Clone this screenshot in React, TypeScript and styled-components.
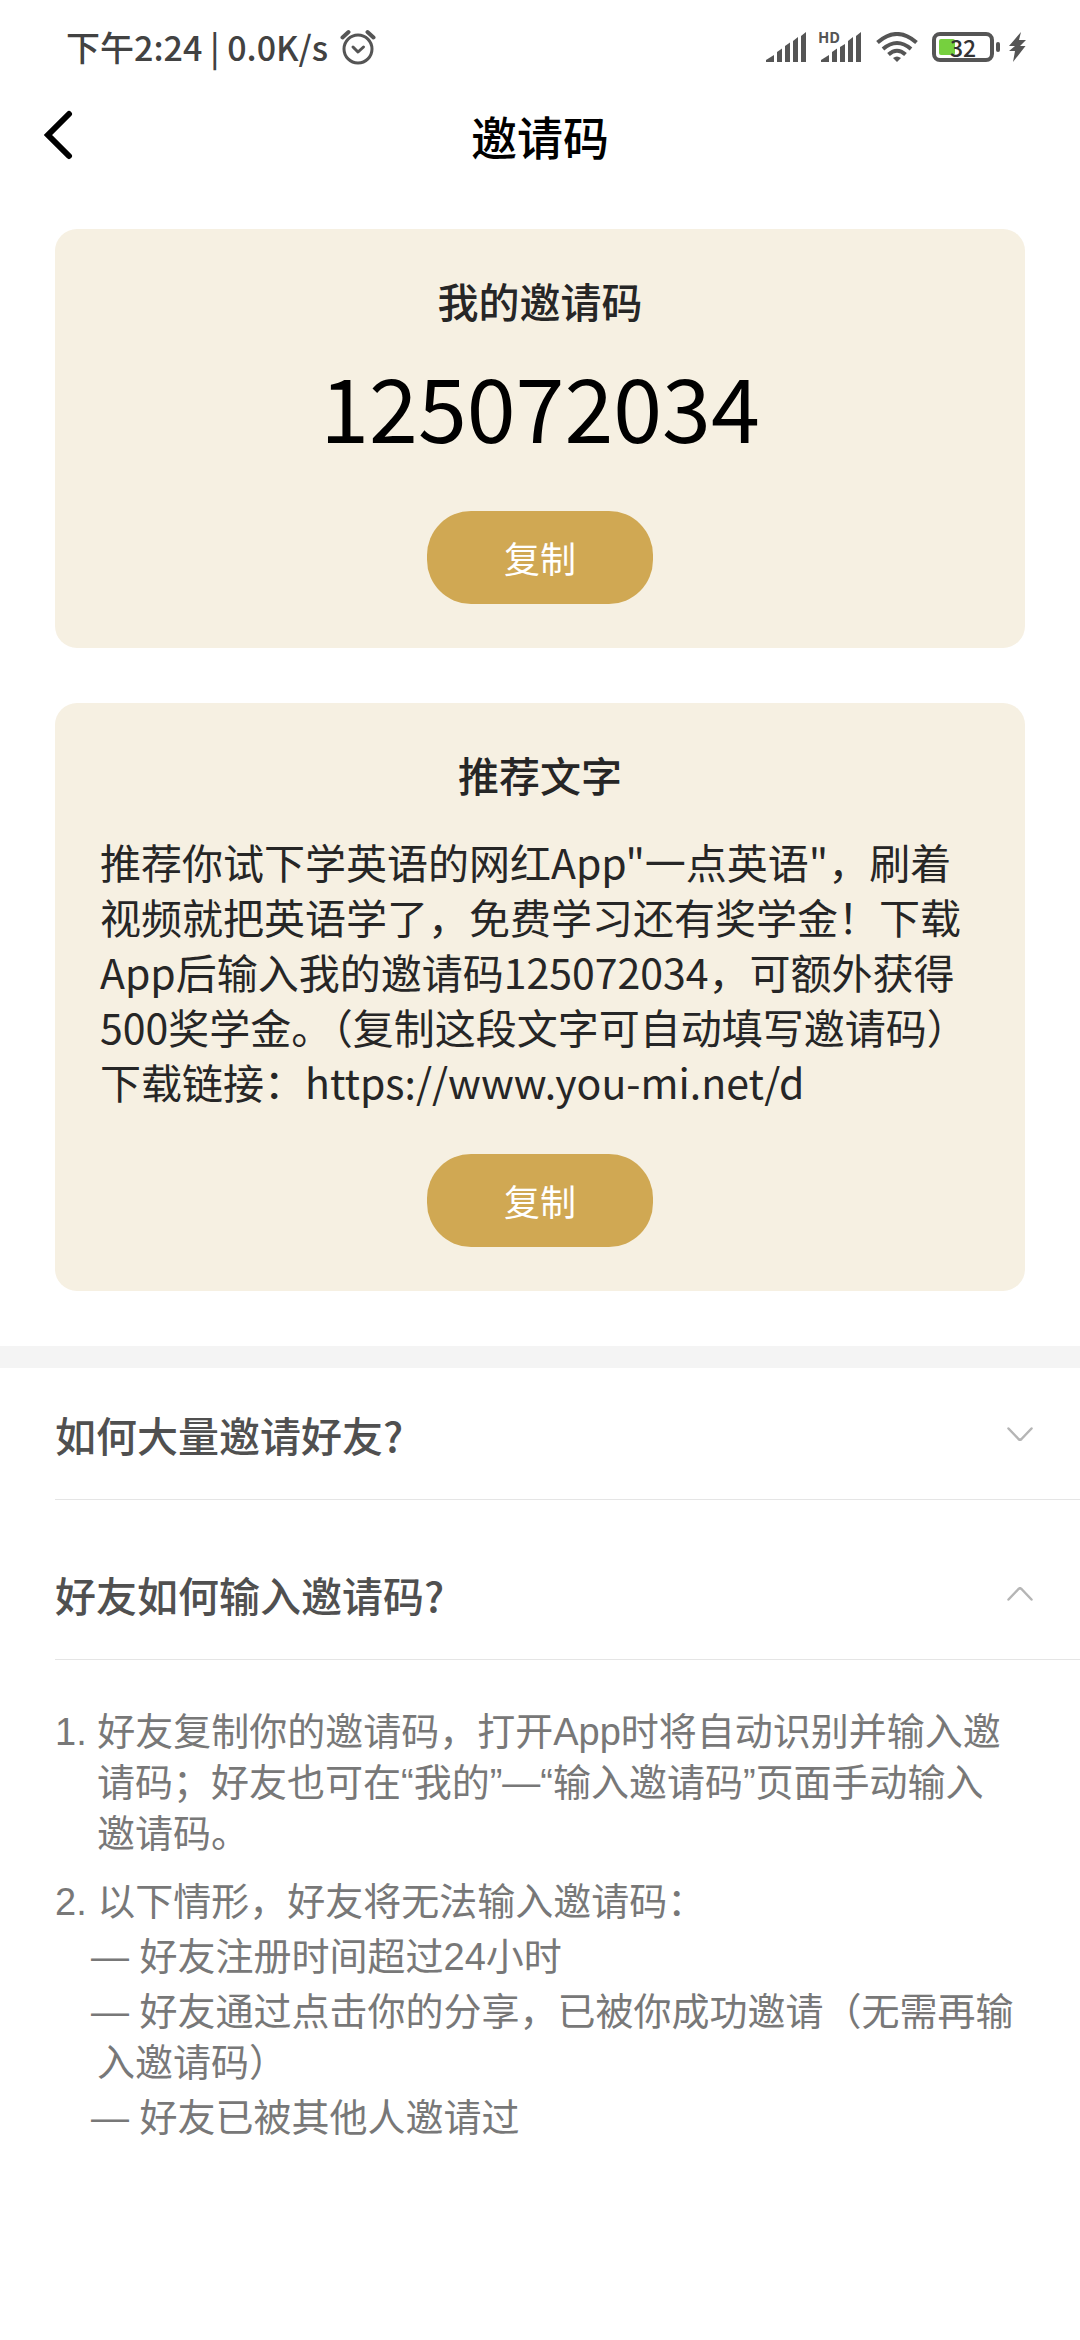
import React, { useState } from "react";
import styled, { createGlobalStyle } from "styled-components";

const GlobalStyle = createGlobalStyle`
  *, *::before, *::after { box-sizing: border-box; }
  body {
    margin: 0;
    background: #ffffff;
    font-family: "Noto Sans CJK SC", "Noto Sans", sans-serif;
    color: #262626;
  }
  h1, h2, h3, p, ol, ul { margin: 0; padding: 0; }
  button { font-family: inherit; border: 0; padding: 0; background: none; cursor: pointer; }
`;

const StatusBar = styled.div`
  display: flex;
  align-items: center;
  justify-content: space-between;
  height: 94px;
  padding: 0 54px 0 66px;
  color: #424242;
`;

const StatusGroup = styled.div<{ $gap: number }>`
  display: flex;
  align-items: center;
  gap: ${(p) => p.$gap}px;
`;

const StatusText = styled.span`
  font-size: 34px;
  line-height: 40px;
  font-weight: 500;
  white-space: pre;
`;

const Signal = styled.div`
  position: relative;
  display: flex;
`;

const NetworkTag = styled.span`
  position: absolute;
  left: -3px;
  top: -3px;
  font-size: 15px;
  line-height: 16px;
  font-weight: 700;
  color: #555555;
`;

const Battery = styled.div`
  position: relative;
  display: flex;
`;

const BatteryLevel = styled.span`
  position: absolute;
  inset: 0 6px 0 0;
  display: flex;
  align-items: center;
  justify-content: center;
  font-size: 23px;
  line-height: 30px;
  font-weight: 500;
  color: #333333;
`;

const Header = styled.header`
  display: grid;
  grid-template-columns: 116px 1fr 116px;
  align-items: center;
  height: 82px;
`;

const BackButton = styled.button`
  display: flex;
  align-items: center;
  height: 82px;
  padding-left: 43px;
`;

const Title = styled.h1`
  font-size: 46px;
  line-height: 82px;
  font-weight: 500;
  text-align: center;
  color: #000000;
`;

const Cards = styled.main`
  display: flex;
  flex-direction: column;
  gap: 55px;
  padding: 53px 55px 55px;
`;

const Card = styled.section`
  display: flex;
  flex-direction: column;
  align-items: center;
  padding: 42px 45px 44px;
  border-radius: 22px;
  background: #f6f0e2;
`;

const CardTitle = styled.h2`
  font-size: 41px;
  line-height: 58px;
  font-weight: 500;
`;

const Code = styled.p`
  margin: 21px 0 51px;
  font-size: 88px;
  line-height: 110px;
  color: #000000;
`;

const Message = styled.p`
  align-self: stretch;
  margin: 31px 0 45px;
  font-size: 41px;
  line-height: 55px;
`;

const CopyButton = styled.button`
  width: 226px;
  height: 93px;
  border-radius: 44px;
  background: #d0a853;
  color: #ffffff;
  font-size: 36px;
  line-height: 93px;
`;

const Faq = styled.section`
  display: flex;
  flex-direction: column;
  gap: 28px;
  border-top: 22px solid #f4f4f4;
`;

const FaqItem = styled.div`
  padding-left: 55px;
`;

const Question = styled.button`
  display: flex;
  align-items: center;
  justify-content: space-between;
  width: 100%;
  height: 132px;
  padding-right: 47px;
  border-bottom: 1px solid #e5e5e5;
  font-size: 41px;
  line-height: 58px;
  font-weight: 500;
  color: #505050;
`;

const Answers = styled.ol`
  display: flex;
  flex-direction: column;
  gap: 17px;
  padding: 47px 60px 45px 42px;
  list-style: none;
  font-family: "Liberation Sans", "Noto Sans CJK SC", sans-serif;
  font-size: 38px;
  line-height: 51px;
  color: #787878;
`;

const Answer = styled.li`
  text-indent: -42px;
`;

const Cases = styled.ul`
  display: flex;
  flex-direction: column;
  gap: 4px;
  margin-top: 4px;
  list-style: none;
`;

const Case = styled.li`
  text-indent: -6px;
`;

const AlarmIcon = () => (
  <svg width="36" height="36" viewBox="0 0 36 36" fill="none" stroke="#555555" strokeLinecap="round" strokeLinejoin="round" aria-hidden="true">
    <circle cx="18" cy="20" r="14" strokeWidth="3" />
    <path d="M13 18l5 5 5.500-5" strokeWidth="3" />
    <path d="M2.500 8.500l6-5.500M33.500 8.500l-6-5.500" strokeWidth="4" />
  </svg>
);

const SignalIcon = ({ notched }: { notched?: boolean }) => (
  <svg width="41" height="30" viewBox="0 0 41 30" fill="#555555" aria-hidden="true">
    <path d="M0 30v-2l8-5v7z" />
    <path d="M11 30V20l5-3.500V30z" />
    <path d={notched ? "M19 30V15l5-3v18z" : "M19 30V14l5-3.500V30z"} />
    <path d="M27 30V9l5-4v25z" />
    <path d="M35 30V4l5-4v30z" />
  </svg>
);

const WifiIcon = () => (
  <svg width="42" height="30" viewBox="0 0 42 30" fill="none" stroke="#555555" strokeWidth="4" aria-hidden="true">
    <path d="M1.500 10.500Q21-6.500 40.500 10.500" />
    <path d="M7 17Q21 5 35 17" />
    <path d="M12.500 22.500Q21 15 29.500 22.500" />
    <path d="M17 26q4-3 8 0l-4 4z" fill="#555555" stroke="none" />
  </svg>
);

const BatteryIcon = () => (
  <svg width="68" height="30" viewBox="0 0 68 30" aria-hidden="true">
    <rect x="2" y="2" width="58" height="26" rx="6" fill="none" stroke="#555555" strokeWidth="4" />
    <rect x="7" y="7" width="16" height="16" rx="2" fill="#76d03e" />
    <rect x="64" y="10" width="4" height="10" rx="2" fill="#555555" />
  </svg>
);

const BoltIcon = () => (
  <svg width="18" height="30" viewBox="0 0 18 30" fill="#555555" aria-hidden="true">
    <path d="M13 0L1 14h6l-6 5h6L5 30 17.500 14H12l6-6h-7z" />
  </svg>
);

const BackIcon = () => (
  <svg width="30" height="50" viewBox="0 0 30 50" fill="none" stroke="#000000" strokeWidth="6" strokeLinecap="round" strokeLinejoin="miter" aria-hidden="true">
    <path d="M26 4L5 25l21 21" />
  </svg>
);

const Chevron = ({ open }: { open: boolean }) => (
  <svg width="26" height="14" viewBox="0 0 26 14" fill="none" stroke="#b5b5b5" strokeWidth="2.500" strokeLinecap="round" strokeLinejoin="round" aria-hidden="true">
    <path d={open ? "M1.500 12.500L11.500 2q1.500-1.500 3 0L24.500 12.500" : "M1.500 1.500L11.500 12q1.500 1.500 3 0L24.500 1.500"} />
  </svg>
);

const INVITE_CODE = "125072034";

export default function App() {
  const [openItem, setOpenItem] = useState<"invite" | "enter">("enter");

  return (
    <>
      <GlobalStyle />
      <StatusBar>
        <StatusGroup $gap={12}>
          <StatusText>下午2:24 | 0.0K/s</StatusText>
          <AlarmIcon />
        </StatusGroup>
        <StatusGroup $gap={14}>
          <SignalIcon />
          <Signal>
            <NetworkTag>HD</NetworkTag>
            <SignalIcon notched />
          </Signal>
          <WifiIcon />
          <StatusGroup $gap={8}>
            <Battery>
              <BatteryIcon />
              <BatteryLevel>32</BatteryLevel>
            </Battery>
            <BoltIcon />
          </StatusGroup>
        </StatusGroup>
      </StatusBar>

      <Header>
        <BackButton aria-label="返回">
          <BackIcon />
        </BackButton>
        <Title>邀请码</Title>
      </Header>

      <Cards>
        <Card>
          <CardTitle>我的邀请码</CardTitle>
          <Code>{INVITE_CODE}</Code>
          <CopyButton>复制</CopyButton>
        </Card>
        <Card>
          <CardTitle>推荐文字</CardTitle>
          <Message>
            {`推荐你试下学英语的网红App"一点英语"，刷着视频就把英语学了，免费学习还有奖学金！下载App后输入我的邀请码${INVITE_CODE}，可额外获得500奖学金。（复制这段文字可自动填写邀请码）`}
            <br />
            下载链接：https://www.you-mi.net/d
          </Message>
          <CopyButton>复制</CopyButton>
        </Card>
      </Cards>

      <Faq>
        <FaqItem>
          <Question aria-expanded={openItem === "invite"} onClick={() => setOpenItem("invite")}>
            如何大量邀请好友?
            <Chevron open={openItem === "invite"} />
          </Question>
        </FaqItem>
        <FaqItem>
          <Question aria-expanded={openItem === "enter"} onClick={() => setOpenItem("enter")}>
            好友如何输入邀请码?
            <Chevron open={openItem === "enter"} />
          </Question>
          {openItem === "enter" && (
            <Answers>
              <Answer>
                1. 好友复制你的邀请码，打开App时将自动识别并输入邀请码；好友也可在“我的”—“输入邀请码”页面手动输入邀请码。
              </Answer>
              <Answer>
                2. 以下情形，好友将无法输入邀请码：
                <Cases>
                  <Case>— 好友注册时间超过24小时</Case>
                  <Case>— 好友通过点击你的分享，已被你成功邀请（无需再输入邀请码）</Case>
                  <Case>— 好友已被其他人邀请过</Case>
                </Cases>
              </Answer>
            </Answers>
          )}
        </FaqItem>
      </Faq>
    </>
  );
}
